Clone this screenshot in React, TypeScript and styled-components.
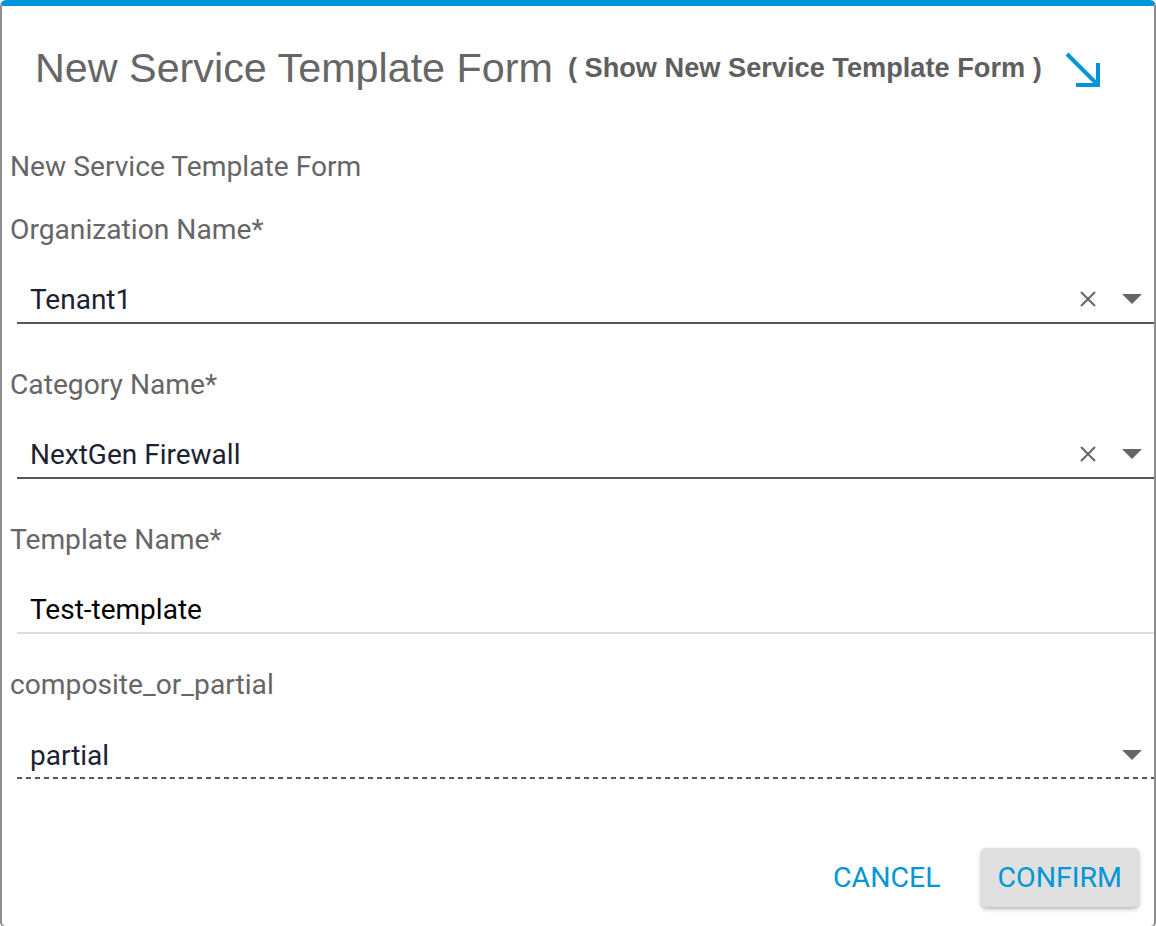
import styled, { createGlobalStyle } from "styled-components";

const GlobalStyle = createGlobalStyle`
  html, body {
    margin: 0;
    padding: 0;
    background: #fff;
  }
  * {
    box-sizing: border-box;
  }
`;

const Dialog = styled.div`
  width: 1156px;
  height: 928px;
  background: #fff;
  border: 2px solid #8d8d8d;
  border-top: 6px solid #0095d9;
  border-radius: 6px;
  display: flex;
  flex-direction: column;
  font-family: Roboto, "Liberation Sans", sans-serif;
  overflow: hidden;
`;

const Header = styled.div`
  height: 132px;
  display: flex;
  align-items: center;
  padding: 0 0 8px 33px;
`;

const Title = styled.h1`
  margin: 0;
  font-family: "Liberation Sans", Arial, sans-serif;
  font-weight: 400;
  font-size: 41.3px;
  color: #666;
  white-space: nowrap;
`;

const SubTitle = styled.span`
  margin-left: 15px;
  font-family: "Liberation Sans", Arial, sans-serif;
  font-weight: 700;
  font-size: 27.2px;
  color: #5f5f5f;
  white-space: nowrap;
`;

const ExpandButton = styled.button`
  margin-left: 21px;
  margin-top: 4px;
  width: 40px;
  height: 40px;
  padding: 0;
  border: none;
  background: none;
  display: flex;
  align-items: center;
  justify-content: center;
  cursor: pointer;
`;

const Body = styled.div`
  flex: 1;
  display: flex;
  flex-direction: column;
  padding-top: 9px;
`;

const SectionTitle = styled.div`
  height: 40px;
  line-height: 40px;
  padding-left: 8px;
  font-size: 28.2px;
  color: #666;
  margin-bottom: 23px;
`;

const Field = styled.div<{ $gap: number }>`
  display: flex;
  flex-direction: column;
  margin-bottom: ${(p) => p.$gap}px;
`;

const Label = styled.label`
  height: 40px;
  line-height: 40px;
  padding-left: 8px;
  font-size: 28.2px;
  color: #666;
`;

const InputRow = styled.div<{ $line: "solid" | "light" | "dashed" }>`
  margin-top: 28px;
  margin-left: 15px;
  height: 46px;
  display: flex;
  align-items: center;
  padding: 0 10px 2px 13px;
  border-bottom: ${(p) =>
    p.$line === "solid"
      ? "2px solid #585858"
      : p.$line === "light"
      ? "2px solid #dcdcdc"
      : "none"};
  background-image: ${(p) =>
    p.$line === "dashed"
      ? "repeating-linear-gradient(to right, #555 0 5px, transparent 5px 9px)"
      : "none"};
  background-size: 100% 2px;
  background-position: bottom left;
  background-repeat: no-repeat;
`;

const Value = styled.span<{ $dark?: boolean }>`
  flex: 1;
  font-size: 28px;
  color: ${(p) => (p.$dark ? "#000" : "#1d2233")};
  white-space: nowrap;
`;

const IconButton = styled.span`
  display: flex;
  align-items: center;
  justify-content: center;
  width: 24px;
  height: 24px;
  margin-left: 20px;
`;

const Actions = styled.div`
  display: flex;
  justify-content: flex-end;
  align-items: center;
  gap: 23px;
  padding: 28px 15px 0 0;
`;

const ActionButton = styled.button<{ $raised?: boolean }>`
  height: 59px;
  padding: 0 17px;
  border: none;
  border-radius: 5px;
  font-family: Roboto, "Liberation Sans", sans-serif;
  font-size: 28.5px;
  text-transform: uppercase;
  color: #0096d6;
  cursor: pointer;
  background: ${(p) => (p.$raised ? "#e0e0e0" : "transparent")};
  box-shadow: ${(p) =>
    p.$raised ? "0 2px 4px rgba(0, 0, 0, 0.3)" : "none"};
`;

const ClearIcon = () => (
  <svg width="16" height="16" viewBox="0 0 16 16">
    <path d="M1 1L15 15M15 1L1 15" stroke="#666" strokeWidth="2" />
  </svg>
);

const CaretIcon = () => (
  <svg width="20" height="10" viewBox="0 0 20 10">
    <path d="M0 0H20L10 10Z" fill="#666" />
  </svg>
);

const ArrowIcon = () => (
  <svg width="38" height="36" viewBox="0 0 38 36">
    <path
      d="M3 2L34 33M12 33H34V11"
      stroke="#0095d9"
      strokeWidth="4"
      fill="none"
    />
  </svg>
);

type FieldProps = {
  label: string;
  value: string;
  line: "solid" | "light" | "dashed";
  clearable?: boolean;
  select?: boolean;
  dark?: boolean;
  gap?: number;
};

const FormField: React.FC<FieldProps> = ({
  label,
  value,
  line,
  clearable,
  select,
  dark,
  gap = 41,
}) => (
  <Field $gap={gap}>
    <Label>{label}</Label>
    <InputRow $line={line}>
      <Value $dark={dark}>{value}</Value>
      {clearable && (
        <IconButton>
          <ClearIcon />
        </IconButton>
      )}
      {select && (
        <IconButton>
          <CaretIcon />
        </IconButton>
      )}
    </InputRow>
  </Field>
);

export default function App() {
  return (
    <>
      <GlobalStyle />
      <Dialog>
        <Header>
          <Title>New Service Template Form</Title>
          <SubTitle>( Show New Service Template Form )</SubTitle>
          <ExpandButton>
            <ArrowIcon />
          </ExpandButton>
        </Header>
        <Body>
          <SectionTitle>New Service Template Form</SectionTitle>
          <FormField
            label="Organization Name*"
            value="Tenant1"
            line="solid"
            clearable
            select
          />
          <FormField
            label="Category Name*"
            value="NextGen Firewall"
            line="solid"
            clearable
            select
          />
          <FormField
            label="Template Name*"
            value="Test-template"
            line="light"
            dark
            gap={31}
          />
          <FormField
            label="composite_or_partial"
            value="partial"
            line="dashed"
            select
          />
          <Actions>
            <ActionButton>Cancel</ActionButton>
            <ActionButton $raised>Confirm</ActionButton>
          </Actions>
        </Body>
      </Dialog>
    </>
  );
}
